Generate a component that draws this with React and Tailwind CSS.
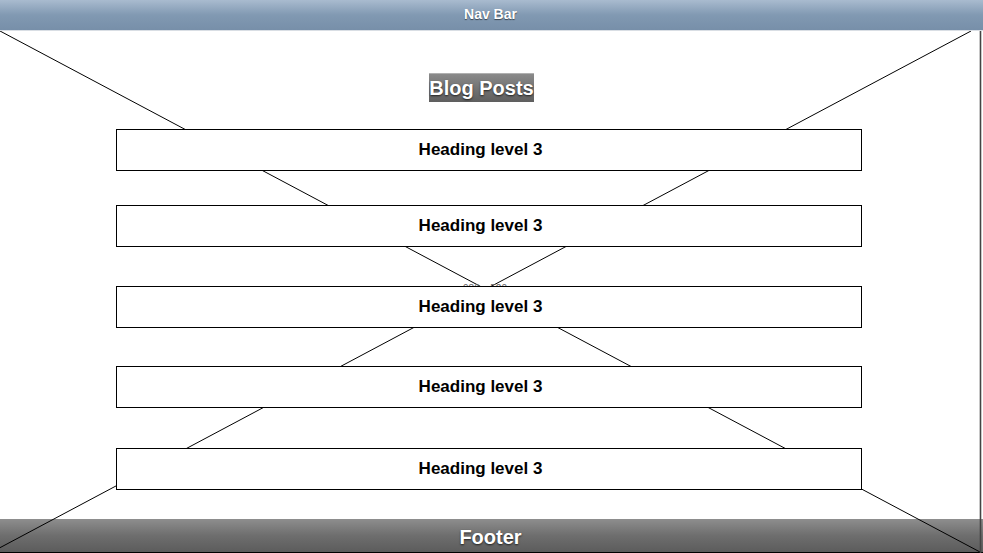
export default function App() {
  const boxes = [
    { mt: 'mt-[27px]' },
    { mt: 'mt-[34px]' },
    { mt: 'mt-[39px]' },
    { mt: 'mt-[38px]' },
    { mt: 'mt-[40px]' },
  ];
  return (
    <div className="relative w-[983px] h-[553px] overflow-hidden bg-white flex flex-col" style={{ fontFamily: '"Liberation Sans", Arial, sans-serif' }}>
      <div className="h-[31px] shrink-0 bg-gradient-to-b from-[#a9bbcf] via-[#8199b2] to-[#778fa9] border-b border-[#d9dee4] flex items-center justify-center">
        <span className="text-white font-bold text-[14px] leading-none [text-shadow:0_1px_1px_rgba(0,0,0,0.55)] mt-[-3px] mr-[2px]">Nav Bar</span>
      </div>
      <svg className="absolute left-0 top-[31px] z-10 pointer-events-none" width="983" height="522" viewBox="0 0 983 522">
        <line x1="0" y1="0" x2="980" y2="521" stroke="#000" strokeWidth="1" />
        <line x1="971" y1="0" x2="-10" y2="522" stroke="#000" strokeWidth="1" />
        <line x1="980.5" y1="0" x2="980.5" y2="522" stroke="#444" strokeWidth="1.6" />
        <text x="485" y="261" textAnchor="middle" fontSize="10" fill="#666" fontFamily="Liberation Sans, Arial, sans-serif">980 x 520</text>
      </svg>
      <div className="flex-1 relative z-20 flex flex-col items-center">
        <div className="mt-[42px] mr-[20px] h-[29px] flex items-center bg-gradient-to-b from-[#8a8a8a] to-[#5e5e5e] border-t border-[#b0b0b0]">
          <span className="text-white font-bold text-[20px] leading-none [text-shadow:0_1px_2px_rgba(0,0,0,0.7)]">Blog Posts</span>
        </div>
        {boxes.map((b, i) => (
          <div key={i} className={`${b.mt} w-[746px] h-[42px] bg-white border border-black flex items-center justify-center pr-[16px] ml-[-6px]`}>
            <span className="text-black font-bold text-[17px] leading-none mt-[-2px]">Heading level 3</span>
          </div>
        ))}
      </div>
      <div className="h-[34px] shrink-0 bg-gradient-to-b from-[#8e8e8e] via-[#6e6e6e] to-[#5c5c5c] border-b border-black flex items-center justify-center">
        <span className="text-white font-bold text-[20px] leading-none [text-shadow:0_1px_2px_rgba(0,0,0,0.7)] mr-[2px] mt-[2px]">Footer</span>
      </div>
    </div>
  );
}
